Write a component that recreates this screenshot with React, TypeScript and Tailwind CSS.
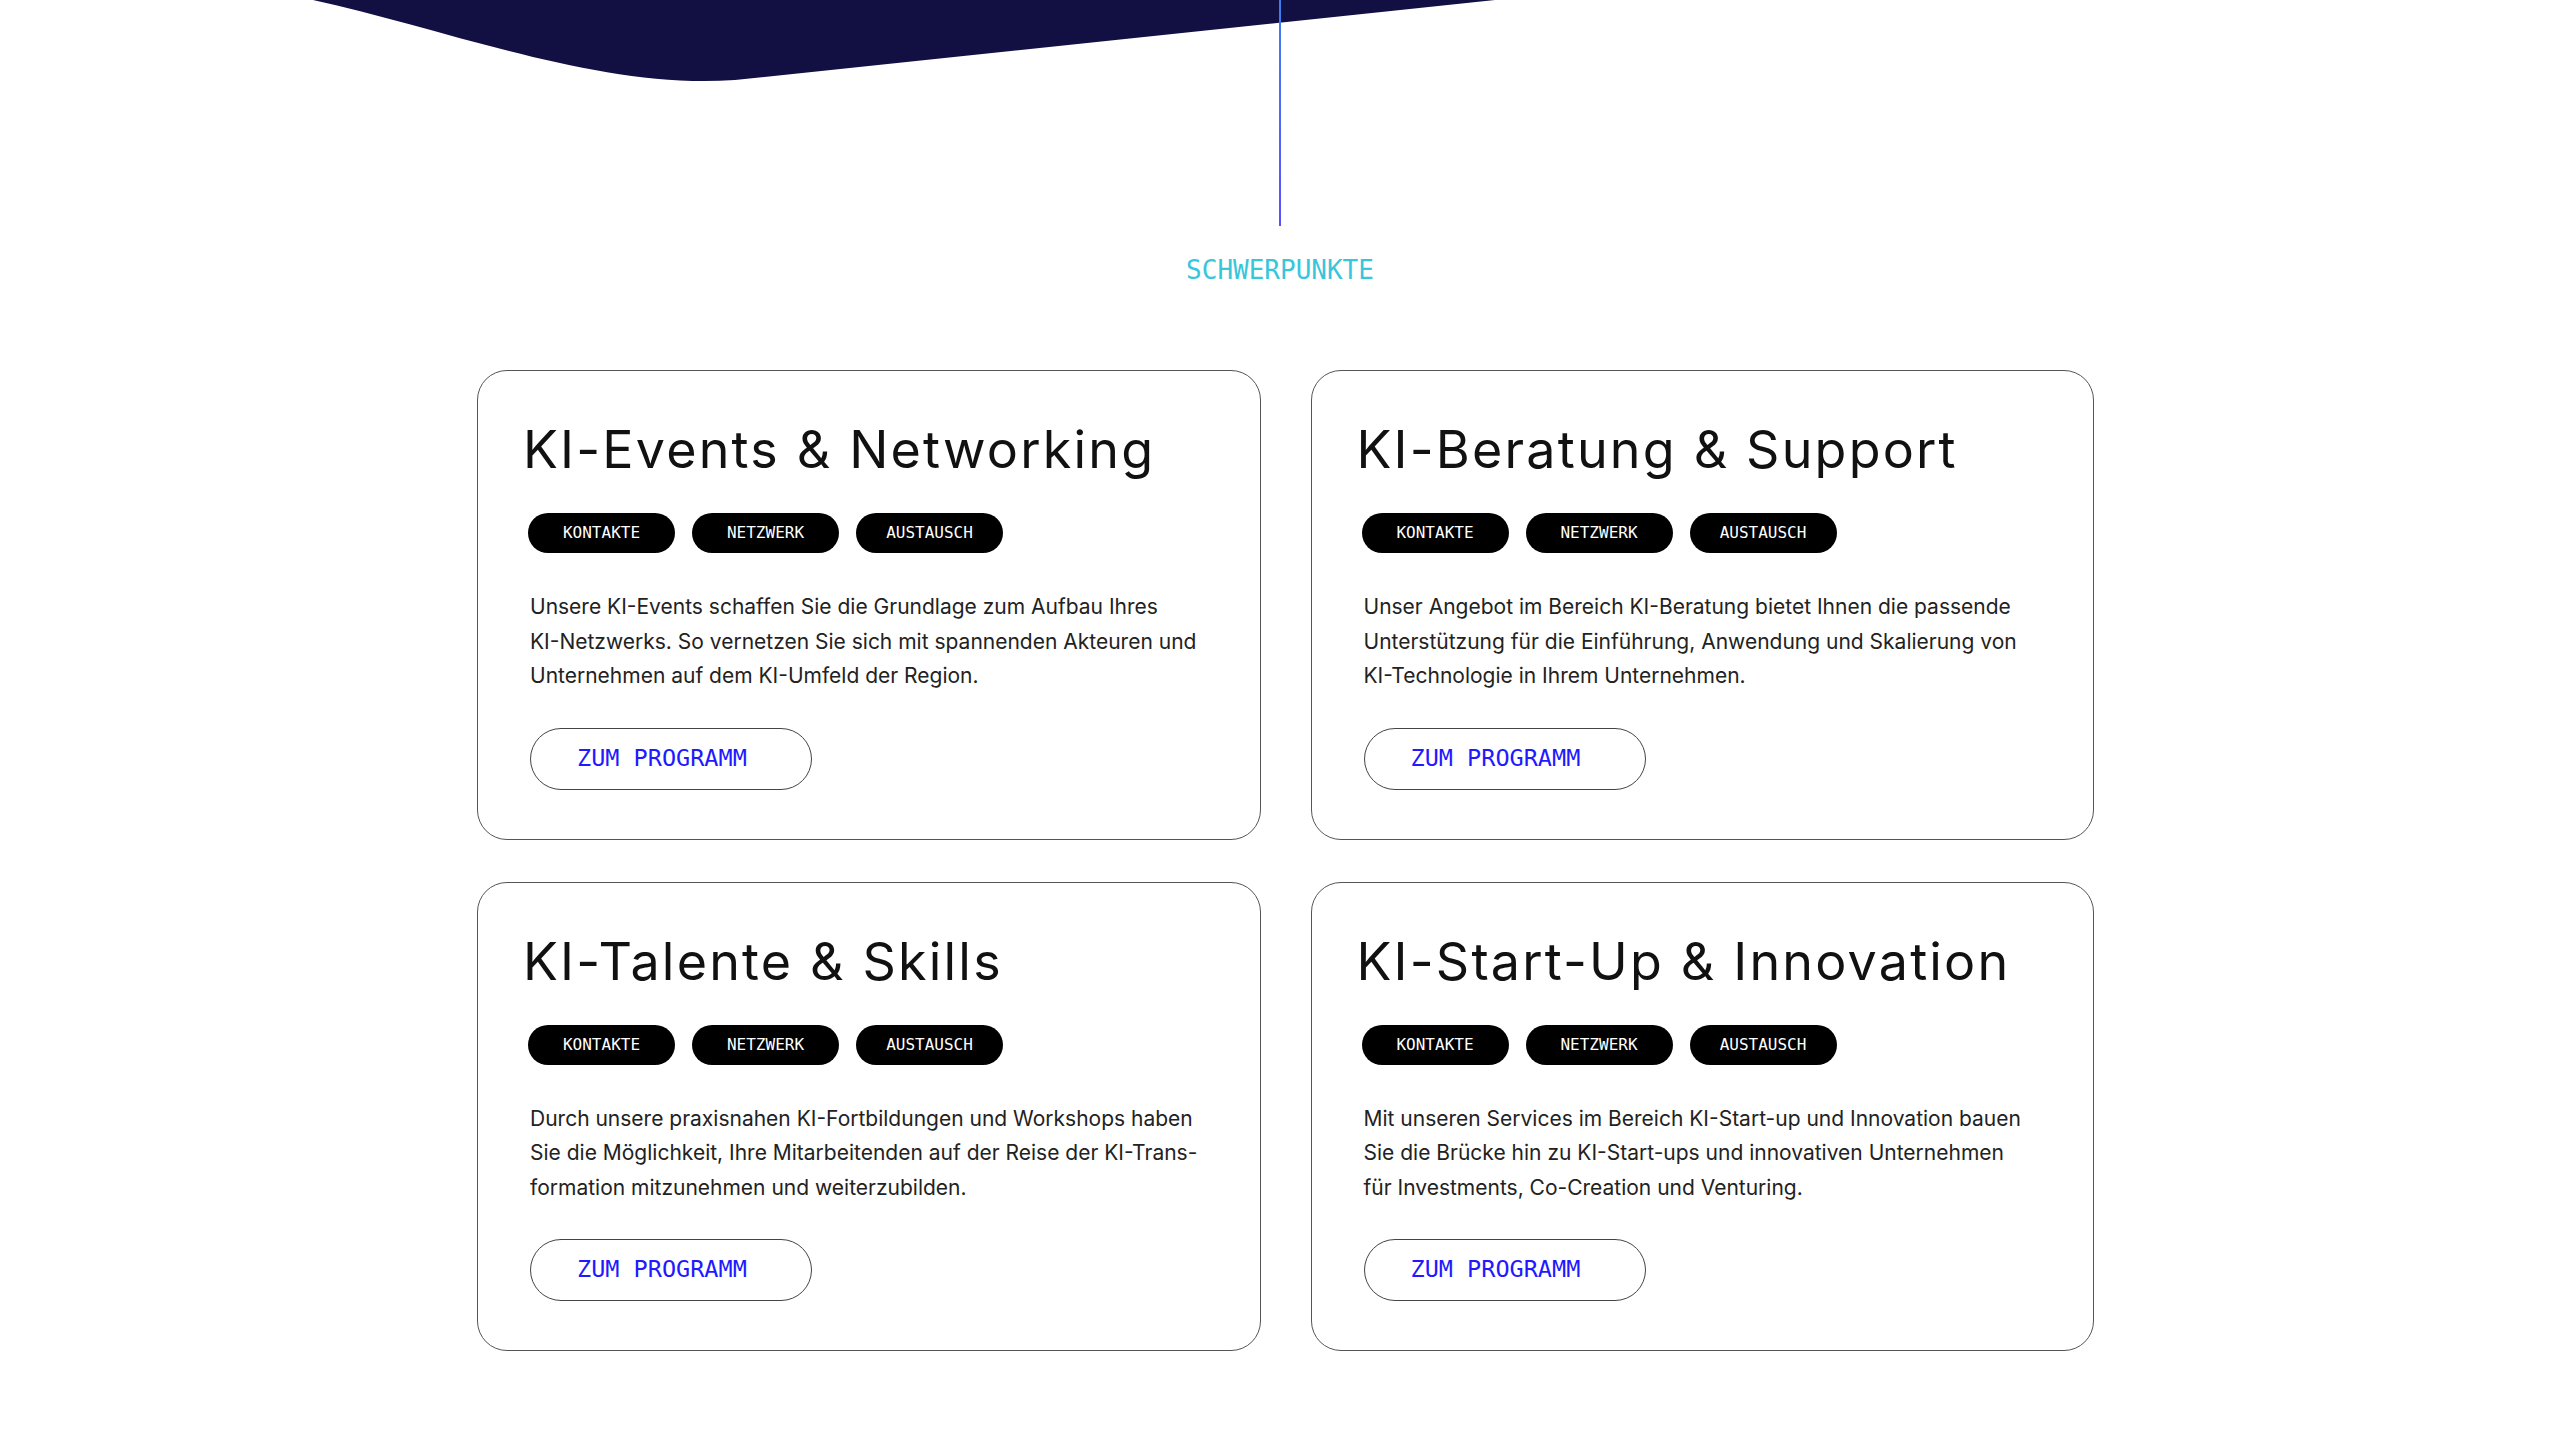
import React from 'react';

type Focus = {
    title: string;
    lines: string[];
};

const focusAreas: Focus[] = [
    {
        title: 'KI-Events & Networking',
        lines: [
            'Unsere KI-Events schaffen Sie die Grundlage zum Aufbau Ihres',
            'KI-Netzwerks. So vernetzen Sie sich mit spannenden Akteuren und',
            'Unternehmen auf dem KI-Umfeld der Region.',
        ],
    },
    {
        title: 'KI-Beratung & Support',
        lines: [
            'Unser Angebot im Bereich KI-Beratung bietet Ihnen die passende',
            'Unterstützung für die Einführung, Anwendung und Skalierung von',
            'KI-Technologie in Ihrem Unternehmen.',
        ],
    },
    {
        title: 'KI-Talente & Skills',
        lines: [
            'Durch unsere praxisnahen KI-Fortbildungen und Workshops haben',
            'Sie die Möglichkeit, Ihre Mitarbeitenden auf der Reise der KI-Trans-',
            'formation mitzunehmen und weiterzubilden.',
        ],
    },
    {
        title: 'KI-Start-Up & Innovation',
        lines: [
            'Mit unseren Services im Bereich KI-Start-up und Innovation bauen',
            'Sie die Brücke hin zu KI-Start-ups und innovativen Unternehmen',
            'für Investments, Co-Creation und Venturing.',
        ],
    },
];

const tags = ['KONTAKTE', 'NETZWERK', 'AUSTAUSCH'];

const mono = "font-['DejaVu_Sans_Mono','Liberation_Mono',monospace]";

const FocusCard: React.FC<{ item: Focus }> = ({ item }) => (
    <div className="border-[1.5px] border-[#555] rounded-[30px] bg-white pt-[53px] pb-[49px] px-[52px]">
        <h2 className="-ml-[7px] text-[52px] leading-none tracking-[0.042em] font-normal text-[#111] font-['Inter',sans-serif] whitespace-nowrap">
            {item.title}
        </h2>
        <div className="flex gap-[17px] mt-[37px] -ml-[2px]">
            {tags.map((tag) => (
                <span
                    key={tag}
                    className={`${mono} w-[147px] h-[40px] rounded-full bg-black text-white text-[16px] flex items-center justify-center`}
                >
                    {tag}
                </span>
            ))}
        </div>
        <p className="mt-[37px] text-[21px] leading-[34.5px] text-[#222] font-['Inter',sans-serif]">
            {item.lines.map((line) => (
                <span key={line} className="block whitespace-nowrap">{line}</span>
            ))}
        </p>
        <button
            className={`${mono} mt-[34px] w-[282px] h-[62px] rounded-full border-[1.5px] border-[#444] pl-[46px] text-left text-[23.5px] text-[#2319ff]`}
        >
            ZUM PROGRAMM
        </button>
    </div>
);

const App: React.FC = () => {
    return (
        <div className="relative min-h-[1441px] bg-white overflow-hidden">
            {/* dark wave at the top */}
            <svg className="absolute top-0 left-0" width="2560" height="100" viewBox="0 0 2560 100">
                <path d="M313 0 C 450 30 600 90 735 80 L 1495 0 Z" fill="#121043" />
            </svg>

            <div className="relative flex flex-col items-center">
                <div className="w-[2px] h-[226px] bg-gradient-to-b from-[#3b7ff2] to-[#5a4dff]" />
                <div className={`${mono} mt-[31px] text-[26px] leading-none text-[#38c6da]`}>SCHWERPUNKTE</div>
            </div>

            <div className="flex justify-center pl-[11px] mt-[87px]">
                <div className="w-[1617px] grid grid-cols-2 gap-x-[50px] gap-y-[42px]">
                    {focusAreas.map((item) => (
                        <FocusCard key={item.title} item={item} />
                    ))}
                </div>
            </div>
        </div>
    );
};

export default App;
